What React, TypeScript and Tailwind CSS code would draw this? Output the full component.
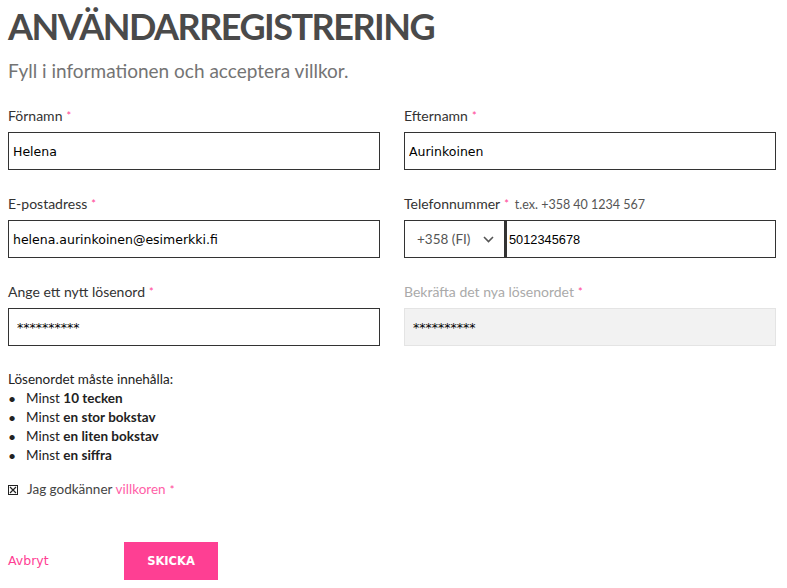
import React from "react";

const Star = () => <span className="ml-1 align-top text-[11px] text-[#ff3e94]">*</span>;

const inputCls =
  "h-[38px] w-full border border-[#333] bg-white px-[4px] text-[12.5px] text-black [font-family:'DejaVu_Sans',sans-serif] outline-none";

const labelCls = "block h-[25px] text-[14px] leading-[17px]";

export default function App() {
  return (
    <div className="min-h-[588px] w-[787px] bg-white px-2 text-[#333] [font-family:Lato,'Noto_Sans',sans-serif]">
      <h1 className="pt-[4px] text-[36px] font-bold leading-[44px] tracking-[-1.5px] text-[#4a4a4a]">
        ANVÄNDARREGISTRERING
      </h1>
      <p className="mt-[12px] text-[19px] leading-[22px] text-[#747474]">
        Fyll i informationen och acceptera villkor.
      </p>

      <div className="mt-[25px] grid w-[768px] grid-cols-2 gap-x-6 gap-y-[25px]">
        <div>
          <label className={labelCls}>
            Förnamn<Star />
          </label>
          <input className={inputCls} defaultValue="Helena" />
        </div>
        <div>
          <label className={labelCls}>
            Efternamn<Star />
          </label>
          <input className={inputCls} defaultValue="Aurinkoinen" />
        </div>

        <div>
          <label className={labelCls}>
            E-postadress<Star />
          </label>
          <input className={inputCls} defaultValue="helena.aurinkoinen@esimerkki.fi" />
        </div>
        <div>
          <label className={labelCls}>
            Telefonnummer<Star />
            <span className="ml-[6px] text-[12.5px] text-[#555]">t.ex. +358 40 1234 567</span>
          </label>
          <div className="flex h-[38px]">
            <div className="flex w-[101px] shrink-0 items-center justify-between border border-[#333] pl-[12px] pr-[10px] text-[13.5px] text-[#555]">
              <span>+358 (FI)</span>
              <svg width="11" height="7" viewBox="0 0 11 7" fill="none">
                <path d="M1 1l4.5 4.5L10 1" stroke="#555" strokeWidth="1.6" />
              </svg>
            </div>
            <input
              className="h-[38px] w-full border border-l-2 border-[#333] bg-white px-[2px] text-[12.8px] text-black [font-family:'Liberation_Sans',sans-serif] outline-none"
              defaultValue="5012345678"
            />
          </div>
        </div>

        <div>
          <label className={labelCls}>
            Ange ett nytt lösenord<Star />
          </label>
          <input className={inputCls + " px-[8px]"} defaultValue="**********" />
        </div>
        <div>
          <label className={labelCls + " text-[#aaa]"}>
            Bekräfta det nya lösenordet<Star />
          </label>
          <input
            className="h-[38px] w-full border border-[#e4e4e4] bg-[#f2f2f2] px-[8px] text-[12.5px] text-black [font-family:'DejaVu_Sans',sans-serif] outline-none"
            defaultValue="**********"
            disabled
          />
        </div>
      </div>

      <div className="mt-[24px] text-[13.5px] leading-[19px] text-[#222]">
        <p>Lösenordet måste innehålla:</p>
        <ul>
          <li className="flex items-center">
            <span className="w-[18px] text-[14px]">•</span>Minst&nbsp;<b>10 tecken</b>
          </li>
          <li className="flex items-center">
            <span className="w-[18px] text-[14px]">•</span>Minst&nbsp;<b>en stor bokstav</b>
          </li>
          <li className="flex items-center">
            <span className="w-[18px] text-[14px]">•</span>Minst&nbsp;<b>en liten bokstav</b>
          </li>
          <li className="flex items-center">
            <span className="w-[18px] text-[14px]">•</span>Minst&nbsp;<b>en siffra</b>
          </li>
        </ul>
        <div className="mt-[15px] flex items-center text-[#444]">
          <span className="mr-[9px] inline-flex h-[10px] w-[10px] items-center justify-center border border-[#222]">
            <svg width="8" height="8" viewBox="0 0 8 8">
              <path d="M1 1l6 6M7 1L1 7" stroke="#222" strokeWidth="1.2" />
            </svg>
          </span>
          Jag godkänner&nbsp;<span className="text-[#ff5fa8]">villkoren</span>
          <Star />
        </div>
      </div>

      <div className="mt-[43px] flex items-center">
        <a className="w-[116px] text-[12.5px] text-[#ff3e94] [font-family:'DejaVu_Sans',sans-serif]">Avbryt</a>
        <button className="h-[38px] w-[94px] bg-[#fe3f93] pt-[1px] text-[11.5px] font-bold text-white [font-family:'DejaVu_Sans',sans-serif]">
          SKICKA
        </button>
      </div>
    </div>
  );
}
